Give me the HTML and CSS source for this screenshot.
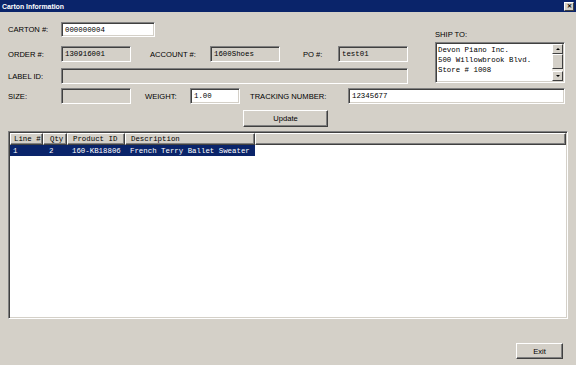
FILE: index.html
```html
<!DOCTYPE html>
<html>
<head>
<meta charset="utf-8">
<link rel="stylesheet" href="styles.css">
</head>
<body>
<div class="window">
  <div class="titlebar">
    <span class="title">Carton Information</span>
    <span class="close">&#x2715;</span>
  </div>
  <div class="content">
    <div class="top">
      <div class="leftcol">
        <div class="row r1">
          <span class="label lw">CARTON #:</span>
          <span class="field white w94 mono">000000004</span>
        </div>
        <div class="row r2">
          <span class="label lw">ORDER #:</span>
          <span class="field w70 mono">130916001</span>
          <span class="label acc">ACCOUNT #:</span>
          <span class="field w70 mono">1600Shoes</span>
          <span class="label po">PO #:</span>
          <span class="field w70 mono">test01</span>
        </div>
        <div class="row r3">
          <span class="label lw">LABEL ID:</span>
          <span class="field w347 mono"></span>
        </div>
      </div>
      <div class="rightcol">
        <div class="label shiplabel">SHIP TO:</div>
        <div class="shipbox">
          <div class="shiptext mono">
            <div>Devon Piano Inc.</div>
            <div>500 Willowbrook Blvd.</div>
            <div>Store # 1008</div>
          </div>
          <div class="scrollbar">
            <div class="sbtn"><span class="tri up"></span></div>
            <div class="track"><div class="thumb"></div></div>
            <div class="sbtn"><span class="tri down"></span></div>
          </div>
        </div>
      </div>
    </div>
    <div class="row r4">
      <span class="label lw">SIZE:</span>
      <span class="field w70 mono"></span>
      <span class="label wt">WEIGHT:</span>
      <span class="field white w50 mono">1.00</span>
      <span class="label trk">TRACKING NUMBER:</span>
      <span class="field white w217 mono">12345677</span>
    </div>
    <div class="row r5">
      <span class="button update">Update</span>
    </div>
    <div class="list">
      <div class="lhead mono">
        <span class="hc c1">Line #</span>
        <span class="hc c2">Qty</span>
        <span class="hc c3">Product ID</span>
        <span class="hc c4">Description</span>
        <span class="hc c5"></span>
      </div>
      <div class="lrow selected mono">
        <span class="c1">1</span>
        <span class="c2">2</span>
        <span class="c3">160-KB18806</span>
        <span class="c4">French Terry Ballet Sweater</span>
      </div>
    </div>
    <div class="row footer">
      <span class="button exit">Exit</span>
    </div>
  </div>
</div>
</body>
</html>
```

FILE: styles.css
```css
html, body {
  margin: 0;
  padding: 0;
  background: #d4d0c8;
}
body {
  font-family: "Liberation Sans", Arial, sans-serif;
  font-size: 7.6px;
  color: #000;
}
.window {
  width: 576px;
  height: 365px;
  display: flex;
  flex-direction: column;
  background: #d4d0c8;
  overflow: hidden;
}
.titlebar {
  height: 12px;
  flex: none;
  background: #0a246a;
  color: #fff;
  display: flex;
  align-items: center;
  justify-content: space-between;
  padding: 0 2px 0 2px;
}
.title {
  font-weight: bold;
  font-size: 6.9px;
  font-family: "Liberation Sans", Arial, sans-serif;
}
.close {
  width: 10px;
  height: 9px;
  box-sizing: border-box;
  background: #d4d0c8;
  color: #000;
  font-size: 6px;
  font-weight: bold;
  line-height: 7px;
  text-align: center;
  border: 1px solid;
  border-color: #fff #404040 #404040 #fff;
}
.content {
  padding: 10px 8px 0 8px;
  display: flex;
  flex-direction: column;
}
.top {
  display: flex;
}
.leftcol {
  width: 400px;
  display: flex;
  flex-direction: column;
}
.rightcol {
  margin-left: 27px;
  width: 130px;
  display: flex;
  flex-direction: column;
}
.row {
  display: flex;
  align-items: center;
}
.label {
  white-space: nowrap;
  flex: none;
}
.lw { width: 53px; }
.r1 { height: 15px; }
.r2 { height: 16px; margin-top: 9px; }
.r3 { height: 16px; margin-top: 6px; }
.r4 { height: 16px; margin-top: 4px; }
.r5 { height: 17px; margin-top: 6px; }
.acc { margin-left: 19px; width: 60px; }
.po { margin-left: 23px; width: 35px; }
.wt { margin-left: 14px; width: 45px; }
.trk { margin-left: 10px; width: 98px; }
.mono {
  font-family: "Liberation Mono", "Courier New", monospace;
  font-size: 7.4px;
}
.field {
  box-sizing: border-box;
  height: 100%;
  flex: none;
  border: 1px solid;
  border-color: #808080 #fff #fff #808080;
  box-shadow: inset 1px 1px 0 #404040, inset -1px -1px 0 #d4d0c8;
  background: #d4d0c8;
  padding: 0 2px 0 3px;
  display: flex;
  align-items: center;
  white-space: nowrap;
}
.field.white { background: #fff; }
.w94 { width: 94px; }
.w70 { width: 70px; }
.w50 { width: 50px; }
.w347 { width: 347px; }
.w217 { width: 217px; }
.shiplabel {
  margin-top: 8px;
  height: 10px;
  line-height: 10px;
}
.shipbox {
  margin-top: 2px;
  height: 41px;
  box-sizing: border-box;
  border: 1px solid;
  border-color: #808080 #fff #fff #808080;
  box-shadow: inset 1px 1px 0 #404040, inset -1px -1px 0 #d4d0c8;
  background: #fff;
  display: flex;
  padding: 1px;
}
.shiptext {
  flex: 1;
  padding: 1px 0 0 1px;
  line-height: 10px;
  white-space: nowrap;
}
.scrollbar {
  width: 11px;
  flex: none;
  display: flex;
  flex-direction: column;
}
.sbtn {
  height: 10px;
  box-sizing: border-box;
  background: #d4d0c8;
  border: 1px solid;
  border-color: #fff #404040 #404040 #fff;
  display: flex;
  align-items: center;
  justify-content: center;
}
.track {
  flex: 1;
  background: #ece9e2;
  display: flex;
  flex-direction: column;
}
.thumb {
  height: 15px;
  box-sizing: border-box;
  background: #d4d0c8;
  border: 1px solid;
  border-color: #fff #404040 #404040 #fff;
}
.tri {
  width: 0;
  height: 0;
  border-left: 2px solid transparent;
  border-right: 2px solid transparent;
}
.tri.up { border-bottom: 2px solid #000; }
.tri.down { border-top: 2px solid #000; }
.button {
  box-sizing: border-box;
  height: 100%;
  flex: none;
  background: #d4d0c8;
  border: 1px solid;
  border-color: #fff #404040 #404040 #fff;
  box-shadow: inset -1px -1px 0 #808080;
  display: flex;
  align-items: center;
  justify-content: center;
}
.update {
  width: 85px;
  margin-left: 235px;
}
.list {
  margin-top: 4px;
  width: 560px;
  height: 188px;
  box-sizing: border-box;
  border: 1px solid;
  border-color: #808080 #fff #fff #808080;
  box-shadow: inset 1px 1px 0 #404040, inset -1px -1px 0 #d4d0c8;
  background: #fff;
  padding: 1px;
  display: flex;
  flex-direction: column;
}
.lhead {
  height: 12px;
  flex: none;
  display: grid;
  grid-template-columns: 33px 24px 58px 130px 1fr;
  background: #d4d0c8;
}
.hc {
  box-sizing: border-box;
  border: 1px solid;
  border-color: #fff #404040 #404040 #fff;
  box-shadow: inset -1px -1px 0 #808080;
  display: flex;
  align-items: center;
  white-space: nowrap;
  overflow: hidden;
}
.lrow {
  height: 11px;
  display: grid;
  grid-template-columns: 33px 24px 58px 130px;
  width: 245px;
  align-items: center;
  white-space: nowrap;
}
.selected {
  background: #0a246a;
  color: #fff;
}
.c1 { padding-left: 3px; }
.c2 { padding-left: 6px; }
.c3 { padding-left: 5px; }
.c4 { padding-left: 5px; }
.footer {
  margin-top: 24px;
  height: 16px;
}
.exit {
  width: 47px;
  margin-left: 508px;
}
```
